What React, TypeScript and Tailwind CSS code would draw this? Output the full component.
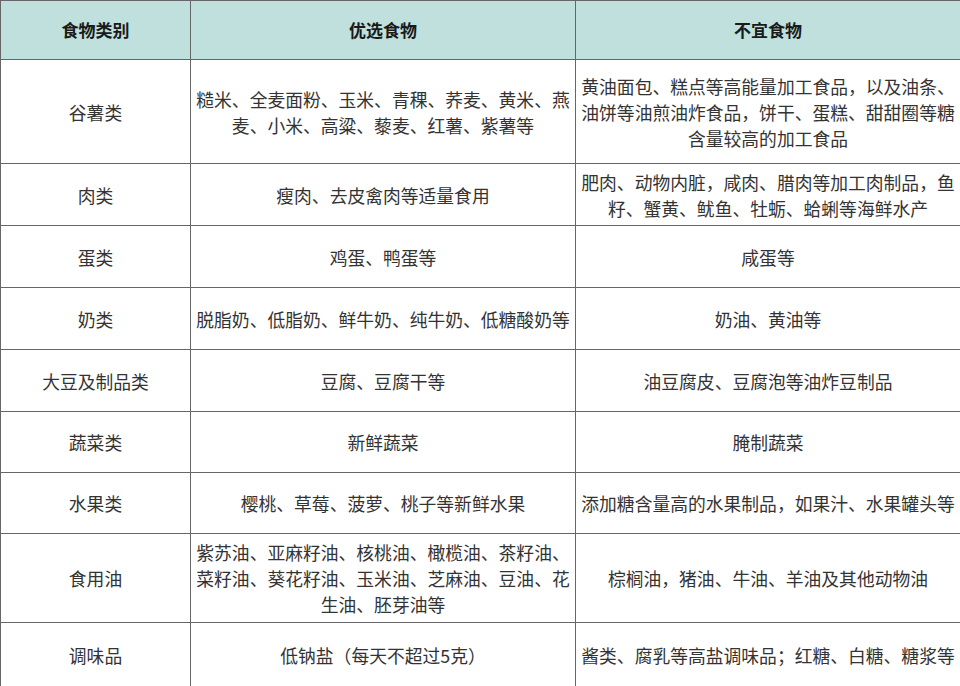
const rows: { name: string; good: string; bad: string; h: string }[] = [
  {
    name: "谷薯类",
    good: "糙米、全麦面粉、玉米、青稞、荞麦、黄米、燕麦、小米、高粱、藜麦、红薯、紫薯等",
    bad: "黄油面包、糕点等高能量加工食品，以及油条、油饼等油煎油炸食品，饼干、蛋糕、甜甜圈等糖含量较高的加工食品",
    h: "h-[104px]",
  },
  {
    name: "肉类",
    good: "瘦肉、去皮禽肉等适量食用",
    bad: "肥肉、动物内脏，咸肉、腊肉等加工肉制品，鱼籽、蟹黄、鱿鱼、牡蛎、蛤蜊等海鲜水产",
    h: "h-[62px]",
  },
  { name: "蛋类", good: "鸡蛋、鸭蛋等", bad: "咸蛋等", h: "h-[62px]" },
  {
    name: "奶类",
    good: "脱脂奶、低脂奶、鲜牛奶、纯牛奶、低糖酸奶等",
    bad: "奶油、黄油等",
    h: "h-[62px]",
  },
  {
    name: "大豆及制品类",
    good: "豆腐、豆腐干等",
    bad: "油豆腐皮、豆腐泡等油炸豆制品",
    h: "h-[62px]",
  },
  { name: "蔬菜类", good: "新鲜蔬菜", bad: "腌制蔬菜", h: "h-[61px]" },
  {
    name: "水果类",
    good: "樱桃、草莓、菠萝、桃子等新鲜水果",
    bad: "添加糖含量高的水果制品，如果汁、水果罐头等",
    h: "h-[61px]",
  },
  {
    name: "食用油",
    good: "紫苏油、亚麻籽油、核桃油、橄榄油、茶籽油、菜籽油、葵花籽油、玉米油、芝麻油、豆油、花生油、胚芽油等",
    bad: "棕榈油，猪油、牛油、羊油及其他动物油",
    h: "h-[89px]",
  },
  {
    name: "调味品",
    good: "低钠盐（每天不超过5克）",
    bad: "酱类、腐乳等高盐调味品；红糖、白糖、糖浆等",
    h: "h-[64px]",
  },
];

export default function App() {
  return (
    <div className="h-[686px] w-[960px] overflow-hidden bg-white font-['Noto_Sans_CJK_SC','Noto_Sans',sans-serif]">
      <table className="w-[960px] table-fixed border-collapse text-center text-[17.8px] leading-[26px] text-[#333]">
        <colgroup>
          <col className="w-[190px]" />
          <col className="w-[385px]" />
          <col className="w-[385px]" />
        </colgroup>
        <thead>
          <tr className="h-[59px] bg-[#bfe0dc] font-bold text-[#1a1a1a]">
            <th className="border border-[#666] px-1 text-[17px]">食物类别</th>
            <th className="border border-[#666] px-1 text-[17px]">优选食物</th>
            <th className="border border-[#666] px-1 text-[17px]">不宜食物</th>
          </tr>
        </thead>
        <tbody>
          {rows.map((r) => (
            <tr key={r.name} className={r.h}>
              <td className="border border-[#666] px-1 align-middle">{r.name}</td>
              <td className="border border-[#666] px-1 align-middle">{r.good}</td>
              <td className="border border-[#666] px-1 align-middle">{r.bad}</td>
            </tr>
          ))}
        </tbody>
      </table>
    </div>
  );
}
